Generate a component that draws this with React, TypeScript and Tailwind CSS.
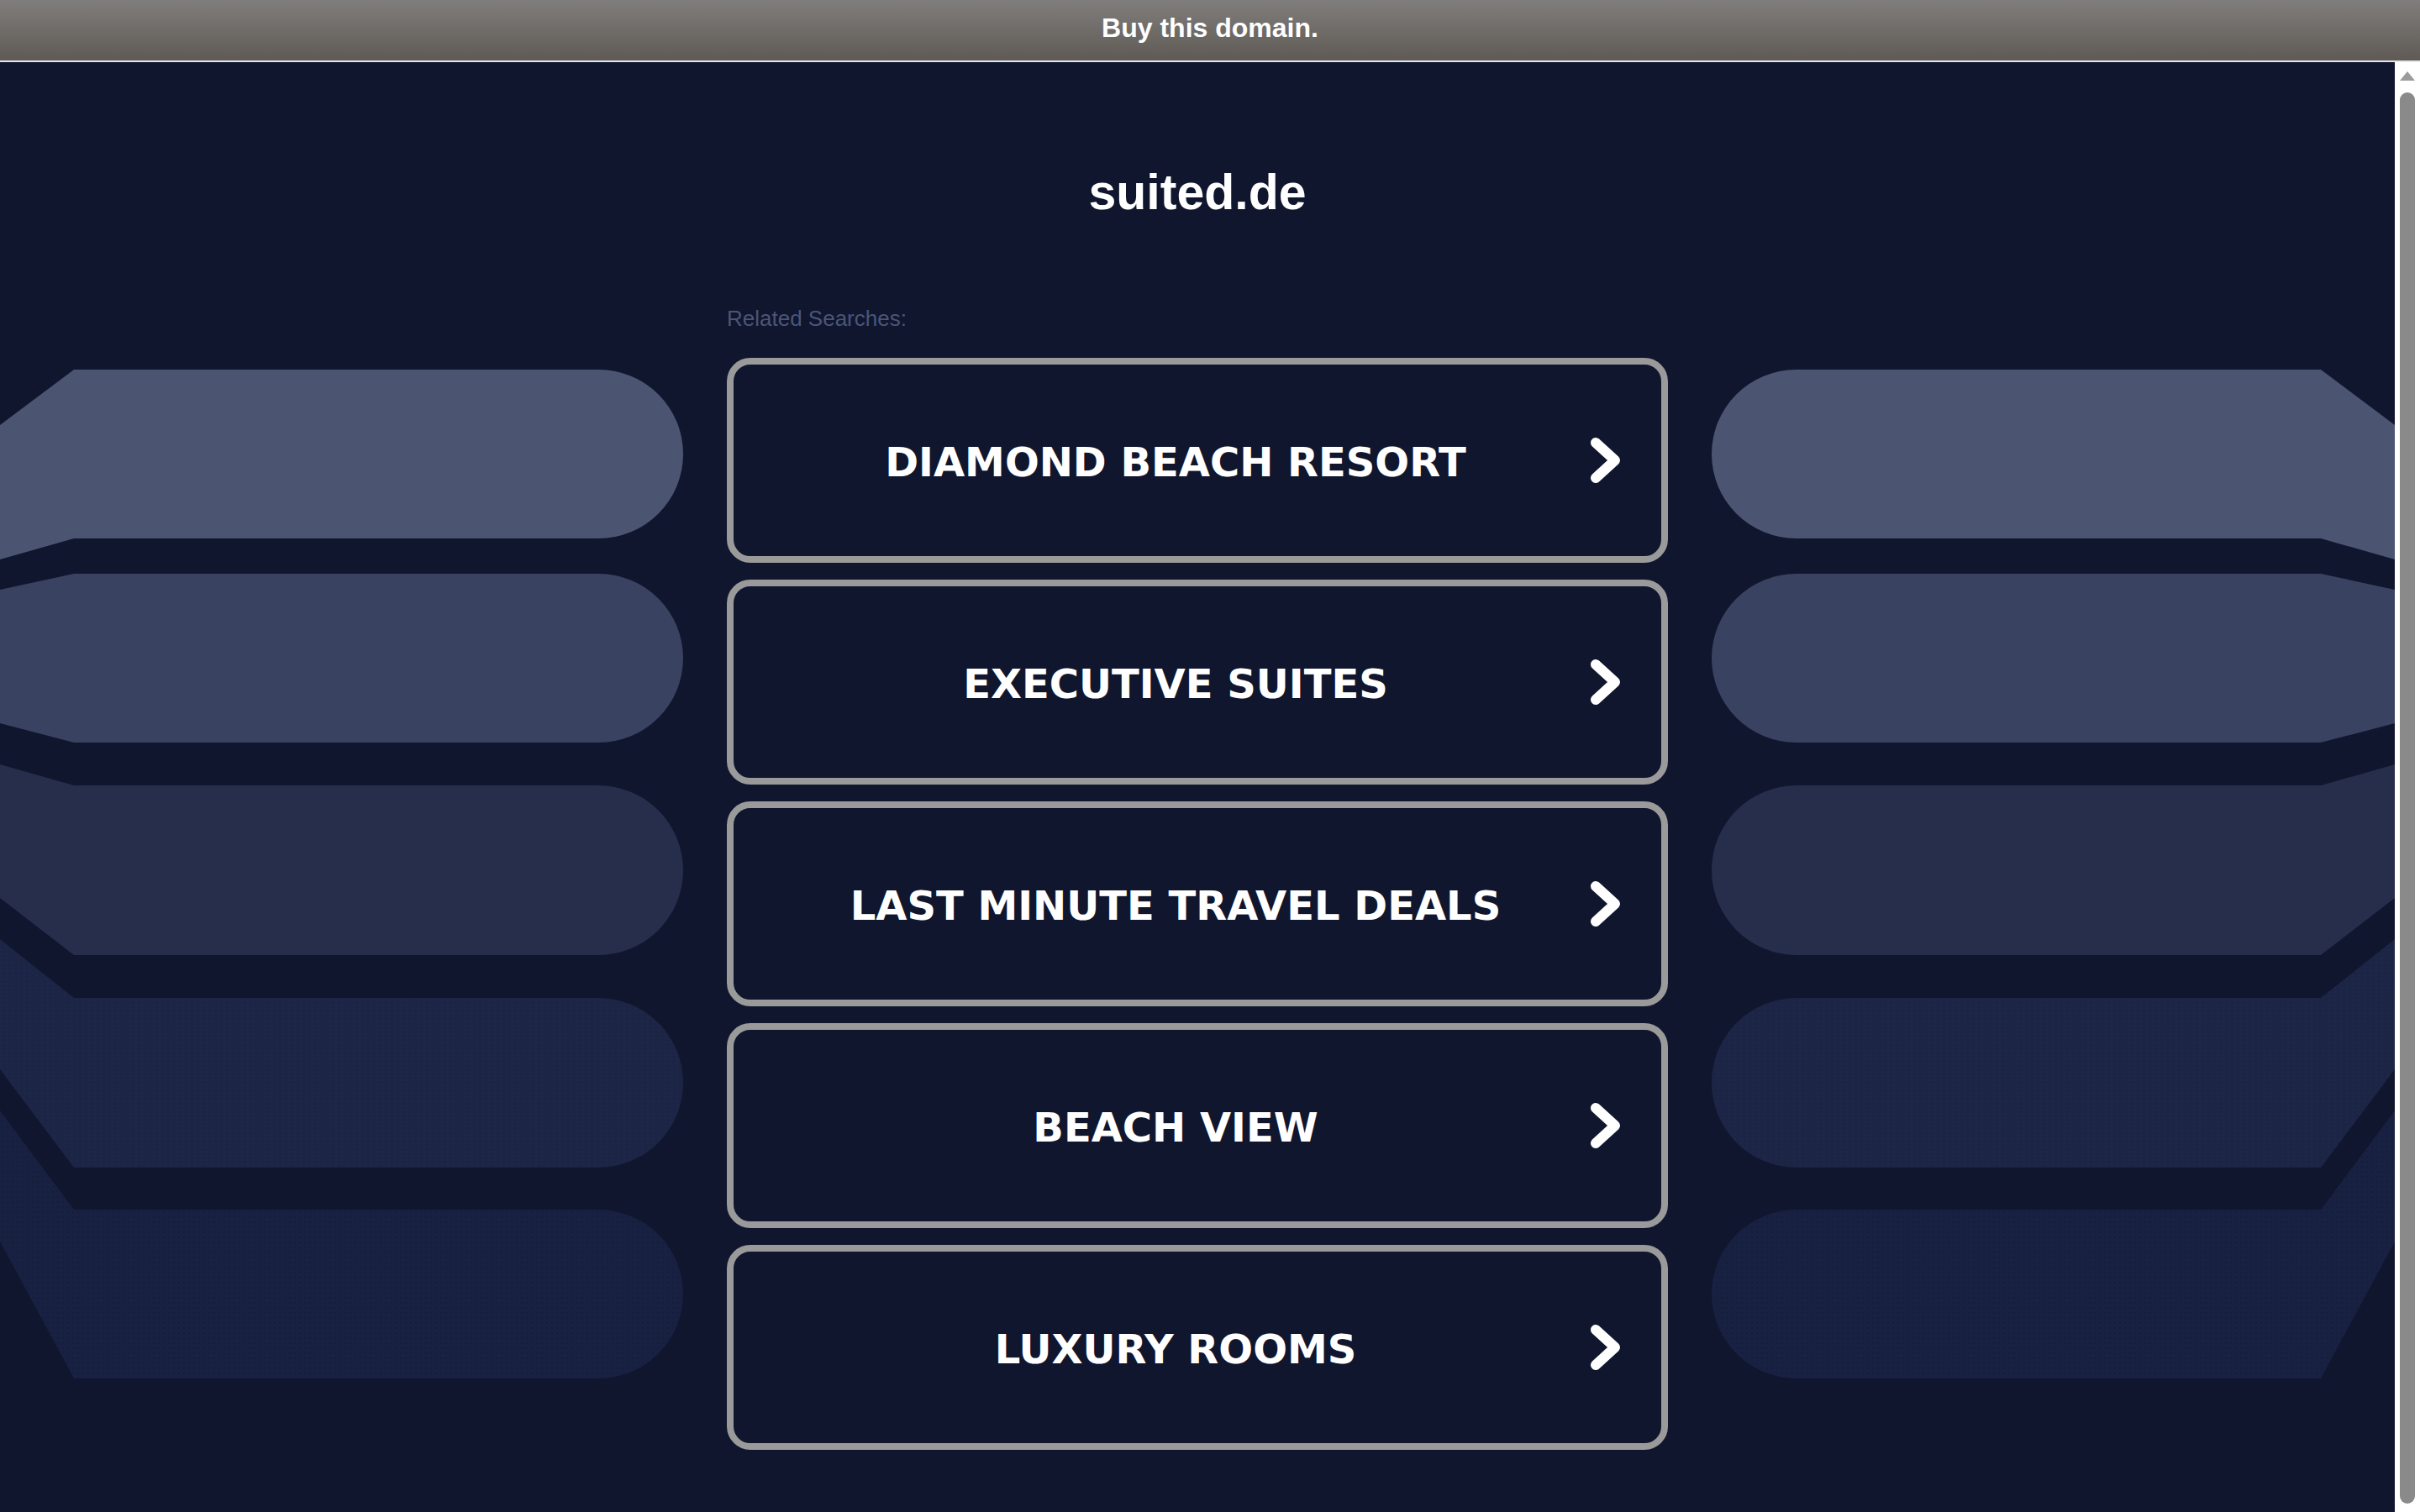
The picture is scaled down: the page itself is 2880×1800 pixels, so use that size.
import React from "react";

const searches = [
  "DIAMOND BEACH RESORT",
  "EXECUTIVE SUITES",
  "LAST MINUTE TRAVEL DEALS",
  "BEACH VIEW",
  "LUXURY ROOMS",
];

// side bands, in page coordinates: corner at x=88, round end at x=813
const bands = [
  { top: 440, bottom: 641, a: 506, b: 666, fill: "#4b5572" },
  { top: 683, bottom: 884, a: 702, b: 861, fill: "#394260" },
  { top: 935, bottom: 1137, a: 910, b: 1069, fill: "#262e4c" },
  { top: 1188, bottom: 1390, a: 1118, b: 1273, fill: "#1c2545" },
  { top: 1440, bottom: 1641, a: 1322, b: 1478, fill: "#182142" },
];

function Bands({ mirror }: { mirror?: boolean }) {
  const id = mirror ? "r" : "l";
  return (
    <svg width="865" height="1220" viewBox="0 430 865 1220" className="block">
      <defs>
        <pattern id={`dots-${id}`} width="6" height="6" patternUnits="userSpaceOnUse">
          <circle cx="3" cy="3" r="0.9" fill="#0f1631" opacity="0.6" />
        </pattern>
        <pattern id={`noise-${id}`} width="7" height="5" patternUnits="userSpaceOnUse">
          <circle cx="1" cy="1" r="0.7" fill="#2a3458" opacity="0.5" />
          <circle cx="4.5" cy="3.5" r="0.6" fill="#141c3a" opacity="0.5" />
        </pattern>
      </defs>
      <g transform={mirror ? "translate(865 0) scale(-1 1)" : undefined}>
        {bands.map((s, i) => {
          const r = (s.bottom - s.top) / 2;
          const d = `M0 ${s.a} L88 ${s.top} L${813 - r} ${s.top} A${r} ${r} 0 0 1 ${813 - r} ${s.bottom} L88 ${s.bottom} L0 ${s.b} Z`;
          return (
            <g key={i}>
              <path d={d} fill={s.fill} />
              {i === 3 && <path d={d} fill={`url(#noise-${id})`} />}
              {i === 4 && <path d={d} fill={`url(#dots-${id})`} />}
            </g>
          );
        })}
      </g>
    </svg>
  );
}

function Chevron() {
  return (
    <svg width="40" height="56" viewBox="0 0 40 56" className="absolute right-[46px] top-1/2 -translate-y-1/2">
      <polyline
        points="8,7 31,28 8,49"
        fill="none"
        stroke="#ffffff"
        strokeWidth="12"
        strokeLinecap="round"
        strokeLinejoin="round"
      />
    </svg>
  );
}

function SearchButton({ label }: { label: string }) {
  return (
    <a
      href="#"
      className="relative flex h-[244px] items-center rounded-[28px] border-[8px] border-[#9a9a9a]"
    >
      <span className="mt-[3px] flex-1 pr-[52px] text-center font-['DejaVu_Sans',sans-serif] text-[48px] font-bold text-white">
        {label}
      </span>
      <Chevron />
    </a>
  );
}

function Scrollbar() {
  return (
    <div className="flex w-[30px] flex-col items-center bg-white pt-[11px]">
      <svg width="18" height="11" viewBox="0 0 18 11">
        <polygon points="9,0 18,11 0,11" fill="#9b9b9b" />
      </svg>
      <div className="mt-[14px] h-[1680px] w-[18px] rounded-full bg-[#8a8a8a]" />
    </div>
  );
}

export default function App() {
  return (
    <div className="flex h-screen flex-col overflow-hidden font-['Liberation_Sans',Arial,sans-serif]">
      <div className="h-[74px] shrink-0 border-b-[2px] border-[#e6e6e6] bg-linear-to-b from-[#807e7c] to-[#5f5a55] pt-[17px] text-center">
        <a href="#" className="text-[32px] leading-[32px] font-bold text-white">
          Buy this domain.
        </a>
      </div>
      <div className="flex min-h-0 flex-1">
        <main className="grid flex-1 grid-cols-[1fr_1120px_1fr] bg-[#10162e]">
          <div className="mt-[356px]">
            <Bands />
          </div>
          <div className="flex flex-col">
            <h1 className="mt-[126px] text-center text-[59px] leading-[58px] font-bold text-white">
              suited.de
            </h1>
            <p className="mt-[108px] text-[26px] leading-[26px] text-[#4b5577]">Related Searches:</p>
            <div className="mt-[34px] flex flex-col gap-[20px]">
              {searches.map((s) => (
                <SearchButton key={s} label={s} />
              ))}
            </div>
          </div>
          <div className="mt-[356px]">
            <Bands mirror />
          </div>
        </main>
        <Scrollbar />
      </div>
    </div>
  );
}
